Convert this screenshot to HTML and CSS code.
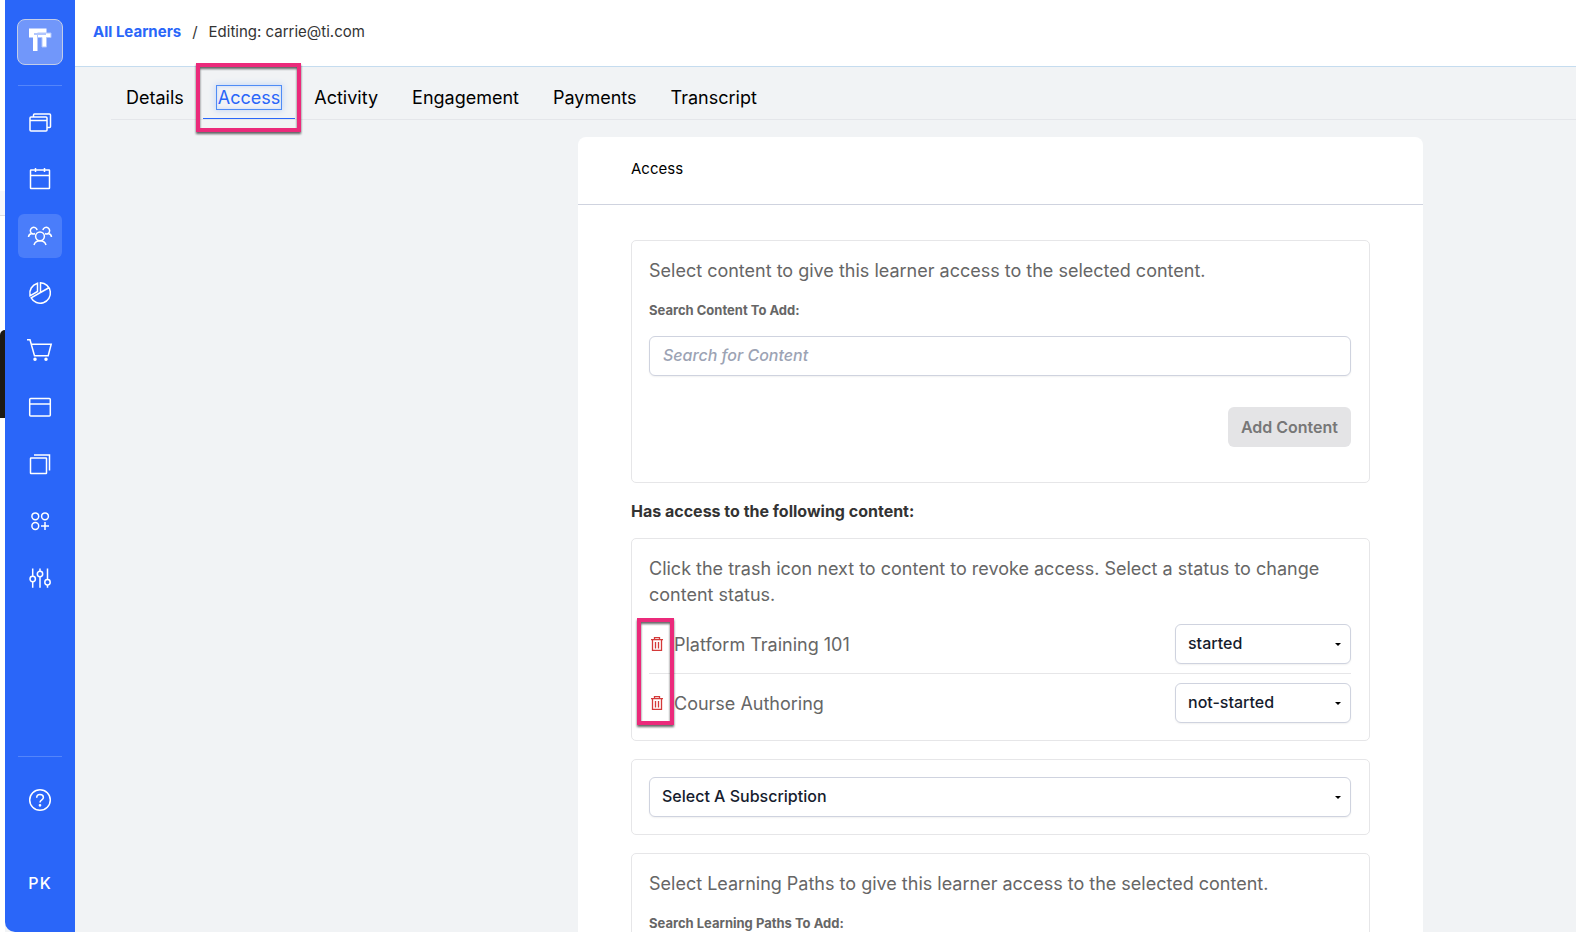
FILE: index.html
```
<!DOCTYPE html>
<html lang="en">
<head>
  <meta charset="UTF-8">
  <meta name="viewport" content="width=device-width, initial-scale=1">
  <title>Editing: carrie@ti.com</title>
  <link rel="stylesheet" href="styles.css">
</head>
<body>

<div class="app">
  <div class="edge">
    <div class="edge-band"></div>
    <div class="edge-photo"></div>
  </div>

  <nav class="sidebar" aria-label="Main">
    <a href="#" class="logo" aria-label="Home">
      <svg viewBox="0 0 46 46" fill="#fff">
        <path d="M12 9.500h17.500V14h-9v18H16V18.500h-4z"/>
        <path d="M29.500 14H34v4.500h-4.500V28H25V18.500h-4.500V14z" stroke="#b0c6fd" stroke-width="1"/>
        <path d="M17 14h12v2H17z" fill="#b0c6fd"/>
      </svg>
    </a>
    <hr>
    <a href="#" class="nav-item" aria-label="Courses">
      <svg viewBox="0 0 24 24"><rect x="2" y="7" width="17" height="14" rx="1"/><path d="M2 10.500h17M5.500 7V5q0-1 1-1h15q1 0 1 1v11.500q0 1-1 1h-2.500"/></svg>
    </a>
    <a href="#" class="nav-item" aria-label="Calendar">
      <svg viewBox="0 0 24 24"><rect x="2.500" y="3" width="19" height="18.500" rx=".5"/><path d="M2.500 8.500h19M7.500 1v4M16.500 1v4"/></svg>
    </a>
    <a href="#" class="nav-item active" aria-label="Learners">
      <svg viewBox="0 0 24 24"><circle cx="12" cy="12.300" r="4.400"/><path d="M6 21c.7-2.600 3-4.300 6-4.300s5.300 1.700 6 4.300M.5 13c.2-2 1.500-3.200 3.300-3.500M3.800 9.500a3.400 3.400 0 1 1 5.300-3.300M23.500 13c-.2-2-1.500-3.200-3.300-3.500M20.200 9.500a3.400 3.400 0 1 0-5.300-3.300M3.800 9.500c1.200.7 2.200.6 3.200 0M20.200 9.500c-1.200.7-2.200.6-3.200 0"/></svg>
    </a>
    <a href="#" class="nav-item" aria-label="Reports">
      <svg viewBox="0 0 24 24"><path d="M12.500 1.800a10.200 10.200 0 1 1-9.300 15l9.300-5.300zM12.500 11.500l8.800-5M9.500 2.300v8.200L2 14.800C.8 9 4 4 9.500 2.300z"/></svg>
    </a>
    <a href="#" class="nav-item" aria-label="Store">
      <svg viewBox="0 0 24 24"><path d="M-1 1.700h3l4.500 16h13.700l3-11.500H3.500"/><circle cx="7" cy="21.300" r="1" fill="#fff"/><circle cx="18" cy="21.300" r="1" fill="#fff"/></svg>
    </a>
    <a href="#" class="nav-item" aria-label="Pages">
      <svg viewBox="0 0 24 24"><rect x="1.700" y="3.500" width="20.600" height="17.500" rx="1"/><path d="M1.700 9h20.600"/></svg>
    </a>
    <a href="#" class="nav-item" aria-label="Library">
      <svg viewBox="0 0 24 24"><rect x="2.500" y="6" width="16" height="15.500" rx=".5"/><path d="M6 3h15.500v15.500"/></svg>
    </a>
    <a href="#" class="nav-item" aria-label="Integrations">
      <svg viewBox="0 0 24 24"><circle cx="7.300" cy="7.300" r="3.400"/><circle cx="17" cy="7.300" r="3.400"/><circle cx="7.300" cy="17" r="3.400"/><path d="M17 13v8M13 17h8"/></svg>
    </a>
    <a href="#" class="nav-item" aria-label="Settings">
      <svg viewBox="0 0 24 24"><circle cx="4.700" cy="13" r="2.700"/><circle cx="12" cy="8" r="2.700"/><circle cx="19.500" cy="16.300" r="2.700"/><path d="M4.700 2.500v7.800M4.700 15.700v6M12 2.500v2.800M12 10.700v11M19.500 2.500v11.100M19.500 19v2.700"/></svg>
    </a>
    <div class="sidebar-bottom">
      <hr>
      <a href="#" class="nav-item" aria-label="Help">
        <svg viewBox="0 0 24 24"><circle cx="12" cy="12" r="10.300"/><path d="M8.700 9.800c0-2 1.400-3.200 3.300-3.200s3.400 1.200 3.400 2.900c0 2.300-3.400 2.300-3.400 5"/><circle cx="12" cy="17.300" r=".6" fill="#fff"/></svg>
      </a>
      <a href="#" class="user">PK</a>
    </div>
  </nav>

  <div class="page">
    <header class="topbar">
      <a href="#">All Learners</a>
      <span>/</span>
      <span>Editing: carrie@ti.com</span>
    </header>

    <nav class="tabs" aria-label="Learner">
      <a href="#" class="tab">Details</a>
      <a href="#" class="tab current"><span>Access</span><i class="marker marker-tab"></i></a>
      <a href="#" class="tab">Activity</a>
      <a href="#" class="tab">Engagement</a>
      <a href="#" class="tab">Payments</a>
      <a href="#" class="tab">Transcript</a>
    </nav>

    <main class="card">
      <h1 class="card-title">Access</h1>
      <div class="card-body">
        <section class="panel">
          <p>Select content to give this learner access to the selected content.</p>
          <label class="label" for="content">Search Content To Add:</label>
          <input class="field" id="content" type="text" placeholder="Search for Content">
          <div class="actions">
            <button type="button" class="btn" disabled>Add Content</button>
          </div>
        </section>

        <h2>Has access to the following content:</h2>
        <section class="panel">
          <p>Click the trash icon next to content to revoke access. Select a status to change content status.</p>
          <div class="content-list">
            <div class="content-row">
              <button type="button" class="trash" aria-label="Revoke Platform Training 101">
                <svg viewBox="0 0 14 16"><path d="M1 3.700h12M4.500 3.500V1.700h5v1.800M2.500 4v10.300h9V4M5.500 6v6.500M8.500 6v6.500"/></svg>
              </button>
              <label for="status1">Platform Training 101</label>
              <select class="field" id="status1">
                <option>started</option>
                <option>not-started</option>
              </select>
            </div>
            <div class="content-row">
              <button type="button" class="trash" aria-label="Revoke Course Authoring">
                <svg viewBox="0 0 14 16"><path d="M1 3.700h12M4.500 3.500V1.700h5v1.800M2.500 4v10.300h9V4M5.500 6v6.500M8.500 6v6.500"/></svg>
              </button>
              <label for="status2">Course Authoring</label>
              <select class="field" id="status2">
                <option>not-started</option>
                <option>started</option>
              </select>
            </div>
            <i class="marker marker-trash"></i>
          </div>
        </section>

        <section class="panel">
          <select class="field" aria-label="Subscription">
            <option>Select A Subscription</option>
          </select>
        </section>

        <section class="panel">
          <p>Select Learning Paths to give this learner access to the selected content.</p>
          <label class="label" for="paths">Search Learning Paths To Add:</label>
          <input class="field" id="paths" type="text">
        </section>
      </div>
    </main>
  </div>
</div>

</body>
</html>
```
FILE: styles.css
```
* {
  box-sizing: border-box;
}

body {
  margin: 0;
  font-family: Inter, sans-serif;
  font-size: 18px;
  color: #666;
  background: #f1f3f5;
}

a {
  text-decoration: none;
}

.app {
  display: flex;
  height: 100vh;
  overflow: hidden;
}

/* sliver of the page behind the window */
.edge {
  width: 5px;
  flex: none;
  background: #fff;
}

.edge-band {
  height: 25px;
  margin-top: 191px;
  background: #f7f7fb;
  border-bottom: 1px solid #dddde2;
}

.edge-photo {
  height: 88px;
  margin-top: 114px;
  background: #1d1a15;
  border-top-left-radius: 5px;
}

.sidebar {
  width: 70px;
  flex: none;
  display: flex;
  flex-direction: column;
  align-items: center;
  gap: 13px;
  padding: 19px 0 27px;
  background: #2a66f9;
  border-bottom-left-radius: 10px;
}

.sidebar hr {
  width: 44px;
  height: 1px;
  margin: 7px 0 1px;
  border: 0;
  background: #5485fa;
}

.logo {
  width: 46px;
  height: 46px;
  border: 1px solid #c3cde8;
  border-radius: 8px;
  background: #7197fa;
}

.logo svg {
  display: block;
  margin: -1px;
  width: 46px;
}

.nav-item {
  display: flex;
  align-items: center;
  justify-content: center;
  width: 44px;
  height: 44px;
  border-radius: 6px;
}

.nav-item.active {
  background: #4a7dfa;
}

.nav-item svg {
  width: 24px;
  height: 24px;
  overflow: visible;
  fill: none;
  stroke: #fff;
  stroke-width: 1.5;
}

.sidebar-bottom {
  display: flex;
  flex-direction: column;
  align-items: center;
  gap: 20px;
  margin-top: auto;
}

.user {
  margin-top: 19px;
  padding: 10px 0;
  font-size: 16px;
  font-weight: 500;
  line-height: 24px;
  letter-spacing: 1px;
  color: #fff;
}

.page {
  flex: 1;
  min-width: 0;
}

.topbar {
  display: flex;
  gap: 11px;
  height: 67px;
  padding: 20px 18px;
  font-size: 15px;
  line-height: 24px;
  color: #333;
  background: #fff;
  border-bottom: 1px solid #c5dcef;
}

.topbar a {
  font-weight: 700;
  color: #2a66f9;
}

.tabs {
  display: flex;
  gap: 4px;
  height: 53px;
  margin-left: 36px;
  border-bottom: 1px solid #e4e6ea;
}

.tab {
  position: relative;
  height: 52px;
  padding: 18px 15px 0;
  line-height: 25px;
  color: #000;
}

.tab.current {
  color: #2a66f9;
  border-bottom: 1px solid #2a66f9;
}

.tab.current span {
  padding: 1px;
  margin: -1px;
  outline: 1px solid #4f8cf5;
  box-shadow: 0 0 6px 2px #c8d8f6, inset 0 0 3px 1px #d5e1f8;
}

/* pink callouts */
.marker {
  position: absolute;
  border: 4px solid #eb2a7b;
  filter: drop-shadow(0 2px 1px rgba(0, 0, 0, .6));
  pointer-events: none;
}

.marker-tab {
  inset: -4px -6px -14px -7px;
}

.marker-trash {
  inset: 3px auto -2px -12px;
  width: 37px;
}

.card {
  max-width: 845px;
  margin: 17px 153px 0 auto;
  background: #fff;
  border-radius: 8px 8px 0 0;
}

.card-title {
  margin: 0;
  padding: 20px 53px 23px;
  font-size: 15px;
  font-weight: 400;
  line-height: 24px;
  color: #000;
  border-bottom: 1px solid #cfd3df;
}

.card-body {
  padding: 35px 53px;
}

.panel {
  margin-bottom: 18px;
  padding: 17px 18px 17px 17px;
  border: 1px solid #e6e6e8;
  border-radius: 5px;
}

.panel p {
  margin: 0;
  line-height: 26px;
}

.label {
  display: block;
  margin: 16px 0;
  font-size: 13px;
  font-weight: 700;
  line-height: 20px;
}

.field {
  display: block;
  width: 100%;
  height: 40px;
  padding: 0 13px 3px;
  font-family: inherit;
  font-size: 16px;
  font-weight: 500;
  color: #161c2d;
  background: #fff;
  border: 1px solid #cfd3df;
  border-radius: 6px;
  box-shadow: 0 1px 2px rgba(0, 0, 0, .06);
}

.field::placeholder {
  font-style: italic;
  color: #9ca3b4;
}

select.field {
  appearance: none;
  padding: 0 12px 2px;
  background: #fff url("data:image/svg+xml,%3Csvg xmlns='http://www.w3.org/2000/svg' width='6' height='3'%3E%3Cpath d='M0 0h6L3 3z'/%3E%3C/svg%3E") no-repeat right 9px center;
}

.actions {
  display: flex;
  justify-content: flex-end;
  margin: 31px 0 18px;
}

.btn {
  height: 40px;
  padding: 0 13px;
  font-family: inherit;
  font-size: 16px;
  font-weight: 600;
  color: #777;
  background: #e4e4e6;
  border: 0;
  border-radius: 6px;
}

h2 {
  margin: 0 0 17px;
  font-size: 16px;
  font-weight: 700;
  line-height: 20px;
  color: #333;
}

.content-list {
  position: relative;
  margin-top: 7px;
}

.content-row {
  display: flex;
  align-items: center;
  padding: 9px 0;
}

.content-row + .content-row {
  padding-bottom: 0;
  border-top: 1px solid #e6e6e8;
}

.content-list label {
  flex: 1;
}

.content-list .field {
  width: 176px;
}

.trash {
  width: 16px;
  height: 18px;
  margin-right: 9px;
  padding: 1px;
  border: 0;
  background: none;
}

.trash svg {
  display: block;
  width: 14px;
  height: 16px;
  fill: none;
  stroke: #d43a3a;
  stroke-width: 1.3;
}
```
